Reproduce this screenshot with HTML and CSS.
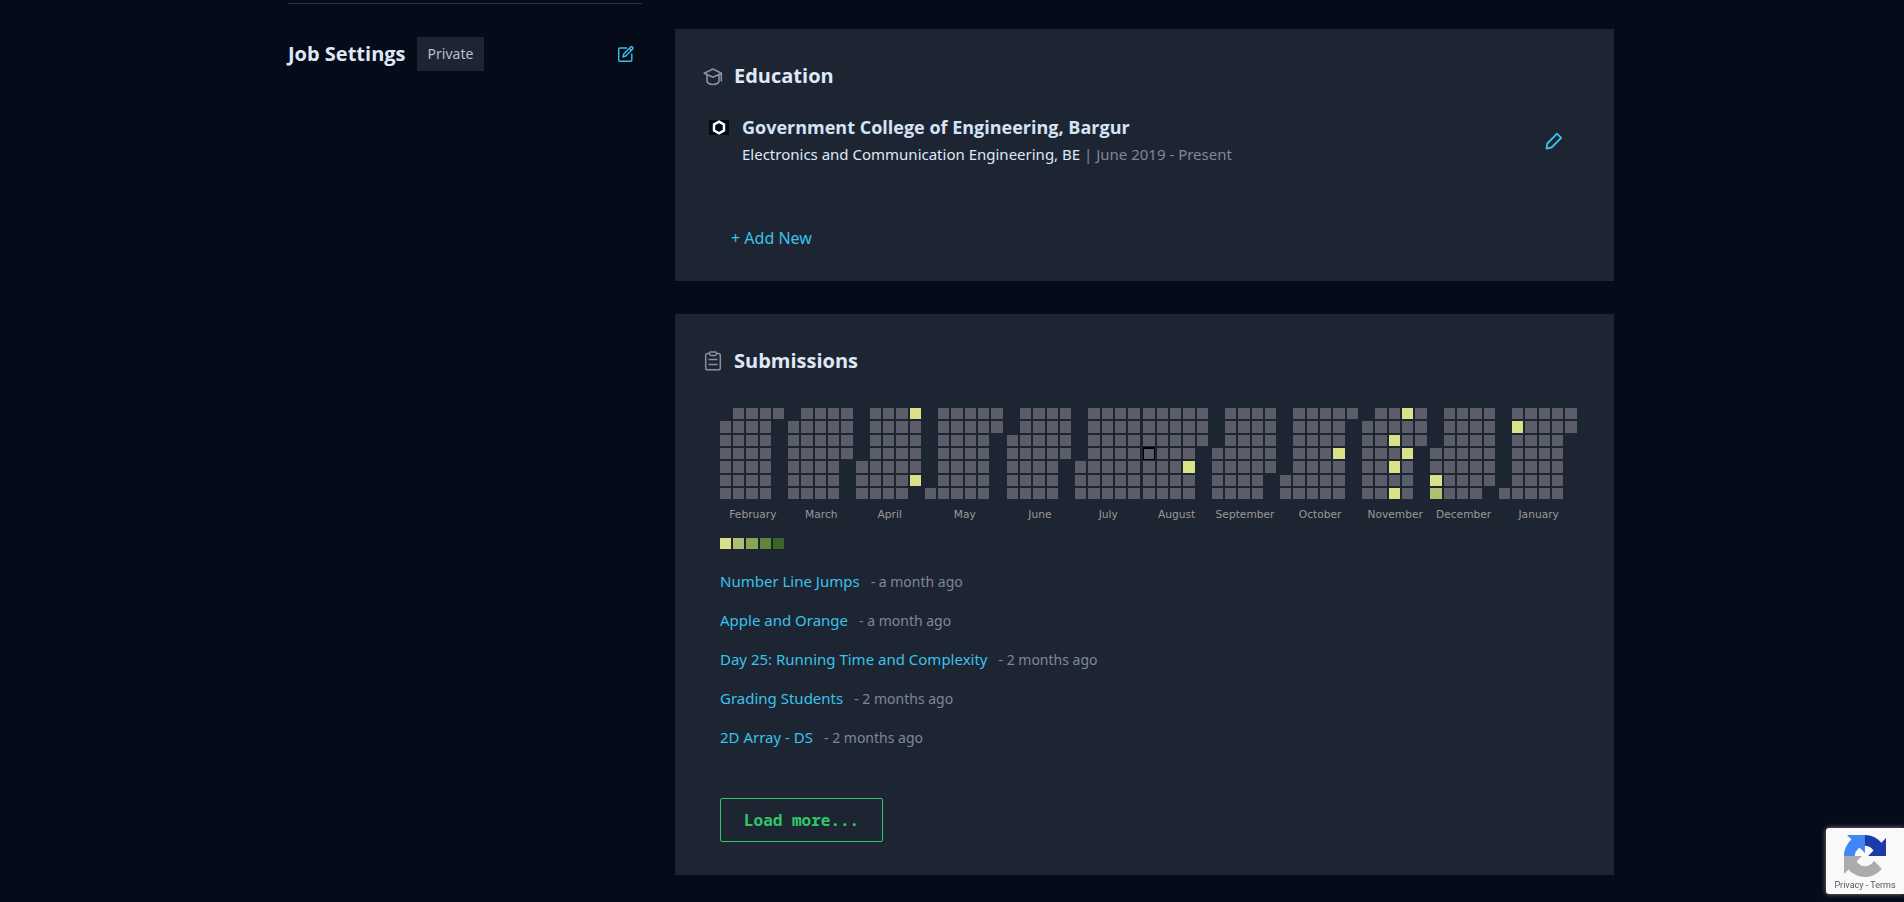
FILE: index.html
```html
<!DOCTYPE html>
<html lang="en">
<head>
<meta charset="utf-8">
<title>Profile</title>
<link rel="stylesheet" href="styles.css">
</head>
<body>
<div class="page">
  <aside class="sidebar">
    <div class="job">
      <h2 class="heading">Job Settings</h2>
      <span class="tag">Private</span>
      <button class="icon-button job-edit" aria-label="Edit job settings">
        <svg width="16" height="16" viewBox="0 0 16 16" fill="none" stroke="currentColor" stroke-width="1.400" stroke-linejoin="round" stroke-linecap="round">
          <path d="M8.5 2H2Q.7 2 .7 3.300V14q0 1.200 1.300 1.200H12.500q1.300 0 1.300-1.200V8"/>
          <path d="M5 11l.7-3 7-7q.8-.7 1.600 0l.4.4q.8.8 0 1.600l-7 7zM11.300 2.500l2 2"/>
        </svg>
      </button>
    </div>
  </aside>
  <main class="content">
    <section class="card">
      <header class="card-head">
        <svg class="head-icon" width="20" height="20" viewBox="0 0 20 20" fill="none" stroke="currentColor" stroke-width="1.600" stroke-linejoin="round" stroke-linecap="round">
          <path d="M1.200 7.300L10 3l8.500 4.300L10 11.300zM4 9v6.500q0 1 1 1.500 2 1.500 5 1.500t5-1.500q1-.5 1-1.500V9M18.300 7.500V15"/>
        </svg>
        <h2 class="heading">Education</h2>
      </header>
      <div class="school">
        <svg class="school-logo" width="20" height="15" viewBox="0 0 20 15">
          <rect width="20" height="15" fill="#050a17"/>
          <path d="M10 1.600l5 2.900v6l-5 2.900-5-2.900v-6z" fill="none" stroke="#fff" stroke-width="2.400"/>
        </svg>
        <div class="school-text">
          <h3 class="school-name">Government College of Engineering, Bargur</h3>
          <p class="school-detail">Electronics and Communication Engineering, BE <span class="muted">| June 2019 - Present</span></p>
        </div>
        <button class="icon-button" aria-label="Edit education">
          <svg width="18" height="18" viewBox="0 0 18 18" fill="none" stroke="currentColor" stroke-width="1.800" stroke-linejoin="round">
            <path d="M1.500 16.500l.8-5L12 1.700l4.200 4.100-9.700 9.700z"/>
          </svg>
        </button>
      </div>
      <a class="link add-new" href="#">+ Add New</a>
    </section>
    <section class="card">
      <header class="card-head">
        <svg class="head-icon" width="20" height="20" viewBox="0 0 20 20" fill="none" stroke="currentColor" stroke-width="1.500" stroke-linejoin="round">
          <path d="M6.500 2.500H4.500Q2.700 2.500 2.700 4.300V17q0 1.800 1.800 1.800h11q1.800 0 1.800-1.800V4.300q0-1.800-1.800-1.800h-2"/>
          <path d="M6.500 3V2q0-.9.900-.9h5.200q.9 0 .9.900v1q0 1.400-1.400 1.400H7.900Q6.500 4.400 6.500 3zM5.500 8.500h9M5.500 13.500h9"/>
        </svg>
        <h2 class="heading">Submissions</h2>
      </header>
      <div class="submissions">
        <svg class="calendar" id="calendar" viewBox="0.6 0 1287 213" role="img" aria-label="Submissions by day"></svg>
        <ul class="list">
          <li><a class="link" href="#">Number Line Jumps</a><span class="when">- a month ago</span></li>
          <li><a class="link" href="#">Apple and Orange</a><span class="when">- a month ago</span></li>
          <li><a class="link" href="#">Day 25: Running Time and Complexity</a><span class="when">- 2 months ago</span></li>
          <li><a class="link" href="#">Grading Students</a><span class="when">- 2 months ago</span></li>
          <li><a class="link" href="#">2D Array - DS</a><span class="when">- 2 months ago</span></li>
        </ul>
        <button class="load-more">Load more...</button>
      </div>
    </section>
  </main>
</div>
<div class="captcha">
  <svg width="42" height="42" viewBox="0 0 64 64">
    <path d="M64 31.955l-.013-1.370V4.687l-7.160 7.160C50.967 4.674 42.033.093 32.033.093c-10.407 0-19.652 4.958-25.488 12.634l11.736 11.860a15.550 15.550 0 0 1 4.754-5.334c2.050-1.600 4.952-2.906 8.968-2.906.485 0 .86.057 1.135.163 4.976.393 9.288 3.140 11.828 7.124l-8.307 8.307L64 31.953" fill="#1c3aa9"/>
    <path d="M31.862.094l-1.370.013H4.594l7.160 7.160C4.580 13.127 0 22.060 0 32.060c0 10.407 4.958 19.652 12.634 25.488l11.860-11.736a15.550 15.550 0 0 1-5.334-4.754c-1.600-2.050-2.906-4.952-2.906-8.968 0-.485.057-.86.163-1.135.393-4.976 3.140-9.288 7.124-11.828l8.307 8.307L31.860.095" fill="#4285f4"/>
    <path d="M.001 32.045l.013 1.370v25.898l7.160-7.160c5.860 7.173 14.774 11.754 24.793 11.754 10.407 0 19.652-4.958 25.488-12.634l-11.736-11.860a15.550 15.550 0 0 1-4.754 5.334c-2.050 1.600-4.952 2.906-8.968 2.906-.485 0-.86-.057-1.135-.163-4.976-.393-9.288-3.140-11.828-7.124l8.307-8.307c-10.522.040-22.400.066-27.295-.005" fill="#ababab"/>
  </svg>
  <div class="captcha-links"><a href="#">Privacy</a> - <a href="#">Terms</a></div>
</div>
<script src="calendar.js"></script>
</body>
</html>
```
FILE: styles.css
```css
* { box-sizing: border-box; }

body {
  margin: 0;
  padding-right: 2px;
  background: #050b19;
  color: #dfe8f6;
  font: 16px/24px "Noto Sans", "Open Sans", sans-serif;
}

h2, h3, p, ul { margin: 0; padding: 0; font-weight: inherit; }

button { font: inherit; cursor: pointer; }

.page {
  display: flex;
  gap: 33px;
  max-width: 1326px;
  margin: 0 auto;
}

.sidebar { flex: 354 1 0; padding-top: 3px; }

.job {
  display: flex;
  align-items: center;
  border-top: 1px solid #2a313f;
  padding: 33px 8px 0 0;
}

.heading {
  font: 700 20px/28px "Open Sans", "Noto Sans", sans-serif;
}

.tag {
  margin-left: 11px;
  padding: 5px 11px;
  background: #1e2532;
  color: #b6bfce;
  font-size: 14px;
}

.icon-button {
  display: flex;
  padding: 0;
  border: 0;
  background: none;
  color: #39c2ec;
}

.job-edit { margin-left: auto; }

.content {
  flex: 939 1 0;
  display: flex;
  flex-direction: column;
  gap: 33px;
  padding: 29px 0 27px;
}

.card { background: #1e2532; padding: 33px 28px 31px; }

.card-head { display: flex; align-items: center; gap: 11px; }

.head-icon { color: #8891a2; }

.school {
  display: flex;
  align-items: center;
  padding: 24px 23px 0 6px;
}

.school-logo { align-self: flex-start; margin-top: 6px; }

.school-text { flex: 1; padding-left: 13px; }

.school-name {
  color: #d5e3f7;
  font: 700 18px/26px "Open Sans", "Noto Sans", sans-serif;
}

.school-detail { font-size: 15px; line-height: 28px; }

.muted { color: #7f8798; }

.link { color: #39c2ec; text-decoration: none; }

.add-new { display: block; width: max-content; margin: 58px 0 0 28px; }

.submissions { padding: 33px 0 2px 17px; }

.calendar { display: block; width: 858px; max-width: 100%; overflow: visible; }

.day { shape-rendering: crispEdges; fill: #5b5e69; }
.day.q1 { fill: #dae289; }
.day.q2 { fill: #adc070; }
.day.q3 { fill: #8aa555; }
.day.q4 { fill: #63843d; }
.day.q5 { fill: #3b6427; }
.day.now { stroke: #000; stroke-width: 2; }

.month {
  fill: #999;
  font: 16px "DejaVu Sans", sans-serif;
  text-anchor: middle;
}

.list { list-style: none; padding-top: 12px; font-size: 15px; line-height: 39px; }

.when { margin-left: 11px; font-size: 14px; color: #7f8798; }

.load-more {
  margin-top: 41px;
  padding: 8px 23px;
  border: 1px solid #2ec866;
  border-radius: 2px;
  background: none;
  color: #2ec866;
  font: 700 16px/26px "Noto Sans Mono", "DejaVu Sans Mono", monospace;
}

.captcha {
  position: fixed;
  right: 0;
  bottom: 8px;
  width: 78px;
  height: 66px;
  padding-top: 7px;
  border-radius: 3px 0 0 3px;
  background: #f9f9f9;
  box-shadow: 0 0 5px #808080;
  text-align: center;
}

.captcha svg { display: block; margin: 0 auto; }

.captcha-links {
  color: #555;
  font: 9px/16px Roboto, sans-serif;
}

.captcha-links a { color: inherit; text-decoration: none; }
```
FILE: calendar.js
```js
// name, weekday row of the 1st, number of days, { day: level }
const months = [
  ["February", 1, 28, {}],
  ["March", 1, 31, {}],
  ["April", 4, 30, { 25: "q1", 30: "q1" }],
  ["May", 6, 31, {}],
  ["June", 2, 30, {}],
  ["July", 4, 31, {}],
  ["August", 0, 31, { 4: "now", 26: "q1" }],
  ["September", 3, 30, {}],
  ["October", 5, 31, { 27: "q1" }],
  ["November", 1, 30, { 16: "q1", 18: "q1", 20: "q1", 21: "q1", 24: "q1" }],
  ["December", 3, 31, { 3: "q1", 4: "q2" }],
  ["January", 6, 31, { 3: "q1" }]
];
const PITCH = 20, CELL = 17, MONTH_GAP = 2.6;
const calendar = document.getElementById("calendar");

function add(tag, attrs, text) {
  const node = document.createElementNS("http://www.w3.org/2000/svg", tag);
  for (const key in attrs) node.setAttribute(key, attrs[key]);
  if (text) node.textContent = text;
  calendar.appendChild(node);
}

function cell(x, y, level) {
  add("rect", { class: "day " + (level || ""), x, y, width: CELL, height: CELL });
}

let left = 0;
for (const [name, start, count, levels] of months) {
  for (let i = 0; i < count; i++) {
    const slot = start + i;
    cell(left + Math.floor(slot / 7) * PITCH, (slot % 7) * PITCH, levels[i + 1]);
  }
  const width = Math.ceil((start + count) / 7) * PITCH;
  add("text", { class: "month", x: left + width / 2, y: 165 }, name);
  left += width + MONTH_GAP;
}

["q1", "q2", "q3", "q4", "q5"].forEach((level, i) => cell(i * PITCH, 195, level));
```
